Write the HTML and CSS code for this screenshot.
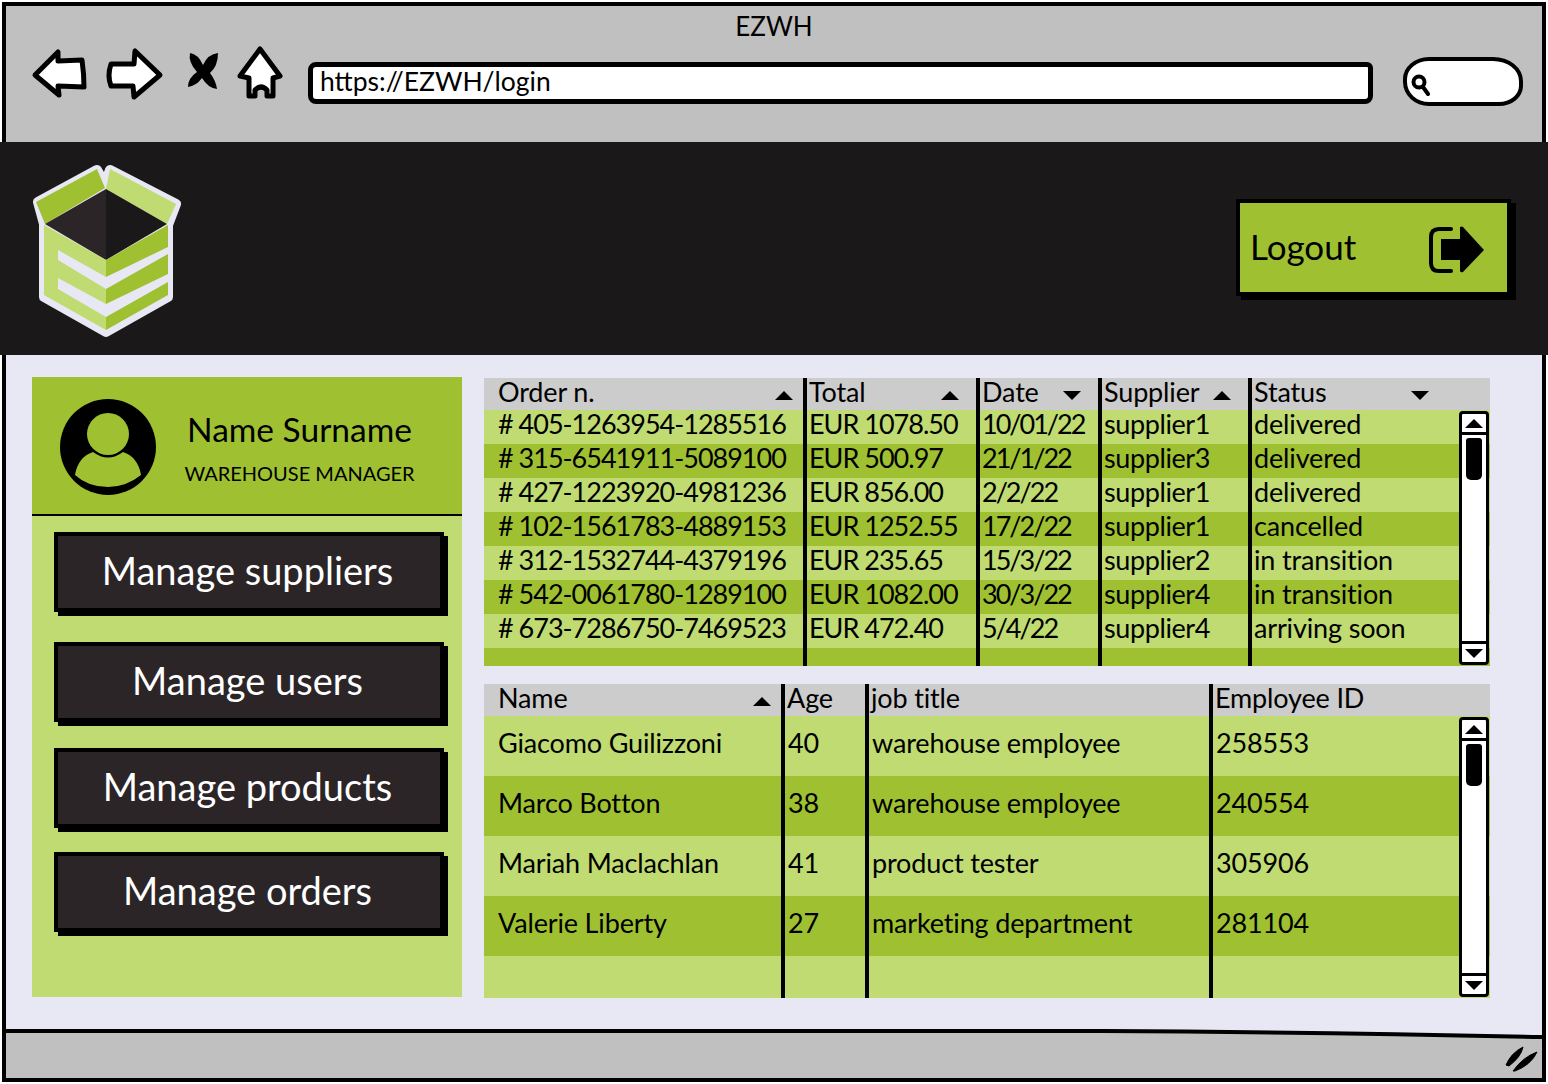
FILE: index.html
```html
<!DOCTYPE html>
<html lang="en">
<head>
  <meta charset="UTF-8" />
  <title>EZWH</title>
  <link rel="stylesheet" href="styles.css">
</head>
<body>
  <div class="window">
    <div class="toolbar">
      <div class="title">EZWH</div>
      <div class="navrow">
        <svg class="nav" width="262" height="62" viewBox="0 0 262 62">
          <g fill="#fff" stroke="#000" stroke-width="5" stroke-linejoin="round">
            <path d="M5 29 L28 6 L28 15 L52 14 Q54 28 54 41 L28 40 L29 49 Z"/>
            <path d="M130 29 L105 5 L104 18 L81 18 Q77 30 81 40 L103 40 L104 51 Z"/>
            <path d="M230 3 L250 30 L243 32 L243 50 L237 50 L237 44 Q231 38 225 44 L225 50 L219 50 L219 32 L210 30 Z"/>
          </g>
          <path d="M160 7 Q168 8 173 19 Q178 8 188 7 Q188 20 180 27 Q186 35 187 43 Q178 42 172 32 Q166 40 158 41 Q158 32 167 26 Q158 16 160 7 Z"/>
        </svg>
        <div class="urlbar">https://EZWH/login</div>
        <div class="search">
          <svg width="24" height="24" viewBox="0 0 24 24">
            <circle cx="11" cy="10" r="5.5" fill="none" stroke="#000" stroke-width="4"/>
            <path d="M15 15 L20 22" stroke="#000" stroke-width="4" stroke-linecap="round"/>
          </svg>
        </div>
      </div>
    </div>

    <div class="banner">
      <svg class="logo" width="152" height="176" viewBox="30 160 152 176">
        <path d="M38 200 L97 168 L105 182 L110 168 L176 202 L168 223 L168 295 L106 330 L44 295 L44 222 Z" fill="#e8e8f4" stroke="#e8e8f4" stroke-width="10" stroke-linejoin="round"/>
        <path d="M36 200 L97 167 L105 186 L45 222 Z" fill="#9fc131"/>
        <path d="M110 167 L176 202 L167 222 L106 187 Z" fill="#bfdb71"/>
        <path d="M45 222 L106 187 L106 258 Z" fill="#2b2528"/>
        <path d="M106 187 L167 222 L106 258 Z" fill="#1b181a"/>
        <path d="M44 223 L106 258 L106 328 L44 293 Z" fill="#bfdb71"/>
        <path d="M58 248 L106 275 L106 287 L58 258 Z" fill="#e8e8f4"/>
        <path d="M58 276 L106 302 L106 315 L58 287 Z" fill="#e8e8f4"/>
        <path d="M106 258 L168 223 L168 245 L106 275 Z" fill="#9fc131"/>
        <path d="M106 287 L168 252 L168 272 L106 302 Z" fill="#9fc131"/>
        <path d="M106 315 L168 280 L168 293 L106 328 Z" fill="#9fc131"/>
      </svg>
      <div class="logout">
        <span class="logout-text">Logout</span>
        <svg class="logout-icon" width="58" height="48" viewBox="0 0 58 48">
          <path d="M24 3 L12 3 Q4 3 4 11 L4 37 Q4 45 12 45 L24 45" fill="none" stroke="#000" stroke-width="4" stroke-linecap="round"/>
          <path d="M14 13 L33 13 L33 1 Q35 0 36 1 L57 24 L36 46 Q34 47 33 45 L33 34 L14 34 Z"/>
        </svg>
      </div>
    </div>

    <div class="main">
      <div class="sidebar">
        <div class="profile">
          <svg width="96" height="96" viewBox="0 0 96 96">
            <circle cx="48" cy="48" r="48"/>
            <circle cx="48" cy="35" r="21" fill="#9fc131"/>
            <path d="M33 53 Q48 64 63 53 Q78 58 81 76 Q66 88 48 88 Q28 88 15 76 Q18 58 33 53 Z" fill="#9fc131"/>
          </svg>
          <div class="who">
            <div class="who-name">Name Surname</div>
            <div class="who-role">WAREHOUSE MANAGER</div>
          </div>
        </div>
        <div class="menu">
          <div class="menu-btn">Manage suppliers</div>
          <div class="menu-btn gap-30">Manage users</div>
          <div class="menu-btn">Manage products</div>
          <div class="menu-btn gap-24">Manage orders</div>
        </div>
      </div>

      <div class="tables">
        <div class="tablebox">
          <table class="grid orders">
            <colgroup><col class="c1"><col class="c2"><col class="c3"><col class="c4"><col></colgroup>
            <thead>
              <tr>
                <th class="first"><div class="th-in"><span>Order n.</span><i class="up"></i></div></th>
                <th><div class="th-in"><span>Total</span><i class="up"></i></div></th>
                <th><div class="th-in"><span>Date</span><i class="down"></i></div></th>
                <th><div class="th-in"><span>Supplier</span><i class="up"></i></div></th>
                <th><div class="th-in status"><span>Status</span><i class="down"></i></div></th>
              </tr>
            </thead>
            <tbody>
              <tr><td class="first"># 405-1263954-1285516</td><td>EUR 1078.50</td><td>10/01/22</td><td>supplier1</td><td>delivered</td></tr>
              <tr><td class="first"># 315-6541911-5089100</td><td>EUR 500.97</td><td>21/1/22</td><td>supplier3</td><td>delivered</td></tr>
              <tr><td class="first"># 427-1223920-4981236</td><td>EUR 856.00</td><td>2/2/22</td><td>supplier1</td><td>delivered</td></tr>
              <tr><td class="first"># 102-1561783-4889153</td><td>EUR 1252.55</td><td>17/2/22</td><td>supplier1</td><td>cancelled</td></tr>
              <tr><td class="first"># 312-1532744-4379196</td><td>EUR 235.65</td><td>15/3/22</td><td>supplier2</td><td>in transition</td></tr>
              <tr><td class="first"># 542-0061780-1289100</td><td>EUR 1082.00</td><td>30/3/22</td><td>supplier4</td><td>in transition</td></tr>
              <tr><td class="first"># 673-7286750-7469523</td><td>EUR 472.40</td><td>5/4/22</td><td>supplier4</td><td>arriving soon</td></tr>
              <tr class="filler"><td></td><td></td><td></td><td></td><td></td></tr>
            </tbody>
          </table>
          <div class="scroll">
            <div class="sb-btn"><i class="up"></i></div>
            <div class="sb-track"><div class="sb-thumb"></div></div>
            <div class="sb-btn"><i class="down"></i></div>
          </div>
        </div>

        <div class="tablebox">
          <table class="grid people">
            <colgroup><col class="p1"><col class="p2"><col class="p3"><col></colgroup>
            <thead>
              <tr>
                <th class="first"><div class="th-in"><span>Name</span><i class="up"></i></div></th>
                <th>Age</th>
                <th>job title</th>
                <th>Employee ID</th>
              </tr>
            </thead>
            <tbody>
              <tr><td class="first">Giacomo Guilizzoni</td><td>40</td><td>warehouse employee</td><td>258553</td></tr>
              <tr><td class="first">Marco Botton</td><td>38</td><td>warehouse employee</td><td>240554</td></tr>
              <tr><td class="first">Mariah Maclachlan</td><td>41</td><td>product tester</td><td>305906</td></tr>
              <tr><td class="first">Valerie Liberty</td><td>27</td><td>marketing department</td><td>281104</td></tr>
              <tr class="filler"><td></td><td></td><td></td><td></td></tr>
            </tbody>
          </table>
          <div class="scroll">
            <div class="sb-btn"><i class="up"></i></div>
            <div class="sb-track"><div class="sb-thumb"></div></div>
            <div class="sb-btn"><i class="down"></i></div>
          </div>
        </div>
      </div>
    </div>

    <div class="statusbar">
      <svg class="slant" width="1544" height="12" viewBox="0 0 1544 12">
        <path d="M1100 0 L1540 0 L1540 7 Q1300 2 1100 1 Z" fill="#e8e8f4"/>
        <path d="M1100 2 Q1300 3 1540 8" fill="none" stroke="#000" stroke-width="4"/>
      </svg>
      <svg width="34" height="28" viewBox="0 0 34 28">
        <path d="M1 20 Q6 8 18 2 Q16 12 4 21 Z M8 26 Q18 12 32 7 Q26 20 10 26 Z" stroke="#000" stroke-width="1"/>
      </svg>
    </div>
  </div>
</body>
</html>
```

FILE: styles.css
```css
* { box-sizing: border-box; }
html, body { margin: 0; padding: 0; }
body { width: 1548px; height: 1084px; background: #fff; font-family: Lato, "Open Sans", sans-serif; color: #000; overflow: hidden; }

.window { padding-top: 2px; height: 1082px; display: flex; flex-direction: column; }

.toolbar { height: 140px; flex: none; margin: 0 2px; background: #c0c0c0; border: 4px solid #000; border-bottom: none; }
.title { text-align: center; font-size: 26px; height: 38px; padding-top: 4px; }
.navrow { display: flex; align-items: flex-start; padding: 0 0 0 24px; }
.nav { margin-top: 2px; flex: none; }
.urlbar { width: 1065px; height: 42px; margin: 18px 0 0 16px; background: #fff; border: 5px solid #000; border-radius: 8px 6px 8px 8px; font-size: 26.5px; line-height: 29px; padding-left: 7px; flex: none; }
.search { width: 120px; height: 49px; margin: 13px 0 0 30px; background: #fff; border: 4px solid #000; border-radius: 26px 30px 24px 26px / 22px 24px 20px 24px; padding: 11px 0 0 1px; flex: none; }
.search svg { display: block; }

.banner { height: 213px; flex: none; background: #1b181a; display: flex; justify-content: space-between; padding: 20px 37px 0 30px; }
.logo { flex: none; }
.logout { width: 275px; height: 97px; margin-top: 37px; background: #9fc131; border: 4px solid #000; box-shadow: 5px 4px 0 #000; display: flex; align-items: center; justify-content: space-between; padding: 0 22px 0 10px; font-size: 35px; }
.logout-text { margin-top: -4px; }
.logout-icon { margin-top: 4px; }

.main { flex: 1; margin: 0 2px; background: #e8e8f4; border: solid #000; border-width: 0 4px; display: flex; padding: 22px 56px 0 26px; gap: 22px; }

.sidebar { width: 430px; height: 620px; background: #bfdb71; flex: none; }
.profile { height: 139px; background: #9fc131; border-bottom: 2px solid #000; display: flex; align-items: center; padding: 2px 0 0 28px; }
.who { flex: 1; text-align: center; padding: 0 19px 0 0; }
.who-name { font-size: 33.5px; margin-bottom: 12px; }
.who-role { font-size: 20px; }
.menu { padding: 16px 18px 0 22px; display: flex; flex-direction: column; gap: 26px; }
.menu-btn { height: 80px; background: #2b2528; border: 4px solid #000; box-shadow: 4px 4px 0 #000; color: #fff; font-size: 38px; display: flex; align-items: center; justify-content: center; padding: 0 3px 4px 0; }
.gap-30 { margin-top: 4px; }
.gap-24 { margin-top: -2px; }

.tables { width: 1006px; display: flex; flex-direction: column; gap: 18px; padding-top: 1px; flex: none; }
.tablebox { position: relative; }
.grid { width: 1006px; border-collapse: collapse; table-layout: fixed; font-size: 27px; letter-spacing: -0.15px; }
.grid th { background: #ccc; font-weight: normal; height: 32px; padding: 0 0 5px 2px; text-align: left; line-height: 26px; }
.grid td { height: 34px; padding: 0 0 6px 3px; white-space: nowrap; line-height: 26px; }
.orders td { padding-left: 2px; }
.grid th + th, .grid td + td { border-left: 4px solid #000; }
.grid .first { padding-left: 14px; }
.grid tbody tr:nth-child(odd) td { background: #bfdb71; }
.grid tbody tr:nth-child(even) td { background: #9fc131; }
.orders td:nth-child(1), .orders td:nth-child(2) { letter-spacing: -1px; }
.orders td:nth-child(3) { letter-spacing: -2px; }
.orders td:nth-child(4) { letter-spacing: -0.4px; }
.orders .filler td { height: 18px; padding: 0; line-height: 1px; }
.people td { height: 60px; padding-bottom: 6px; }
.people .filler td { height: 42px; padding: 0; }

.c1 { width: 321px; }
.c2 { width: 173px; }
.c3 { width: 122px; }
.c4 { width: 150px; }
.p1 { width: 299px; }
.p2 { width: 84px; }
.p3 { width: 344px; }

.th-in { display: flex; align-items: center; justify-content: space-between; padding-right: 17px; }
.first .th-in { padding-right: 10px; }
.th-in.status { padding-right: 61px; }
i.up, i.down { display: block; width: 0; height: 0; border-left: 9px solid transparent; border-right: 9px solid transparent; margin-top: 8px; }
i.up { border-bottom: 9px solid #000; }
i.down { border-top: 9px solid #000; }

.scroll { position: absolute; top: 33px; right: 1px; bottom: 1px; width: 30px; background: #fff; border: 3px solid #000; border-radius: 4px; display: flex; flex-direction: column; }
.sb-btn { height: 18px; flex: none; display: flex; align-items: center; justify-content: center; }
.sb-btn i { margin: 0; }
.sb-track { flex: 1; border: solid #000; border-width: 3px 0; padding: 3px 4px; }
.sb-thumb { width: 16px; height: 42px; background: #000; border-radius: 3px 3px 5px 5px; margin: 0 auto; }

.statusbar { position: relative; height: 53px; flex: none; margin: 0 2px; background: #c0c0c0; border: 4px solid #000; display: flex; justify-content: flex-end; align-items: flex-end; padding: 0 3px 5px 0; }
.slant { position: absolute; top: -4px; left: -4px; }
```
